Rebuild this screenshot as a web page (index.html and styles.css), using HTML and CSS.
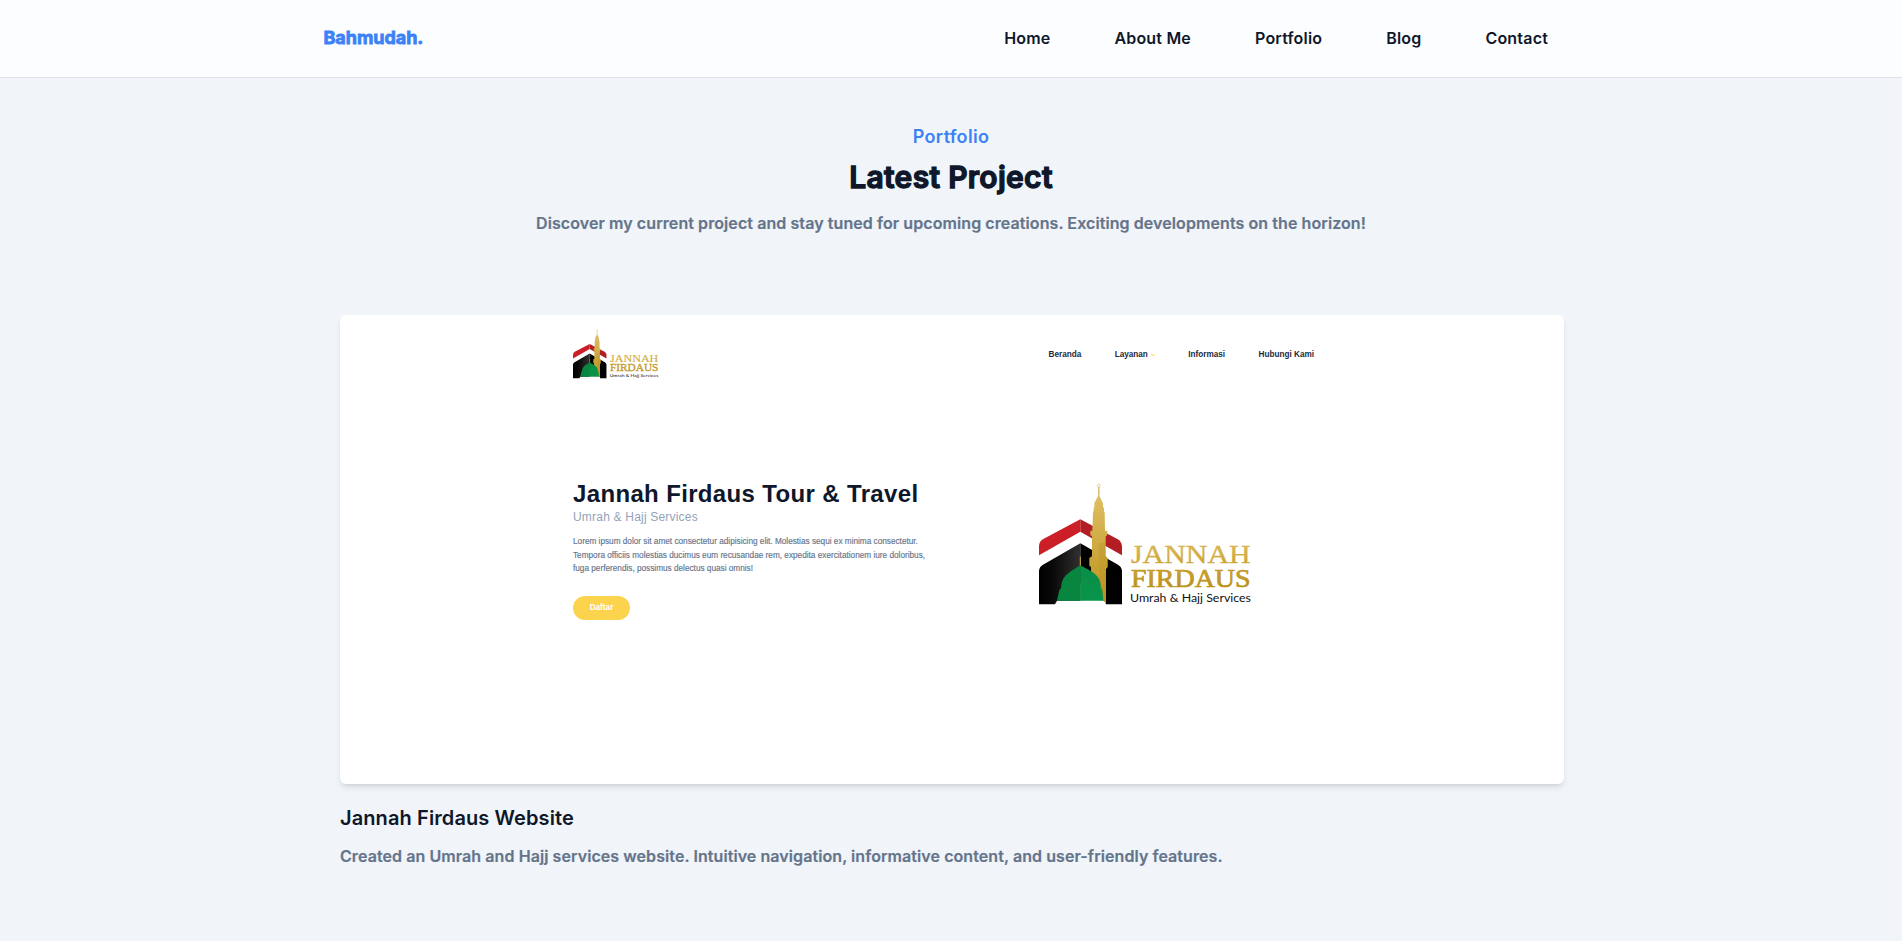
FILE: index.html
```html
<!DOCTYPE html>
<html lang="en">
<head>
<meta charset="utf-8">
<title>Bahmudah.</title>
<link rel="stylesheet" href="styles.css">
</head>
<body>
<header class="header">
  <a class="brand">Bahmudah.</a>
  <nav class="nav"><a>Home</a><a>About Me</a><a>Portfolio</a><a>Blog</a><a>Contact</a></nav>
</header>
<main class="portfolio">
  <div class="intro">
    <h4 class="eyebrow">Portfolio</h4>
    <h2 class="heading">Latest Project</h2>
    <p class="lead">Discover my current project and stay tuned for upcoming creations. Exciting developments on the horizon!</p>
  </div>
  <article class="project">
    <div class="preview">
      <div class="site-header">
        <svg class="site-logo" viewBox="57 40 640 368"><use href="#logo"/></svg>
        <div class="site-nav"><span>Beranda</span><span class="dropdown">Layanan<svg class="chevron" viewBox="0 0 4 4"><path d="M.2 1L2 2.800L3.800 1" fill="none" stroke="#fbd34d" stroke-width="1"/></svg></span><span>Informasi</span><span>Hubungi Kami</span></div>
      </div>
      <div class="site-hero">
        <div class="hero-copy">
          <div class="hero-title">Jannah Firdaus Tour &amp; Travel</div>
          <div class="hero-sub">Umrah &amp; Hajj Services</div>
          <div class="hero-text"><div>Lorem ipsum dolor sit amet consectetur adipisicing elit. Molestias sequi ex minima consectetur.</div><div>Tempora officiis molestias ducimus eum recusandae rem, expedita exercitationem iure doloribus,</div><div>fuga perferendis, possimus delectus quasi omnis!</div></div>
          <div class="hero-button">Daftar</div>
        </div>
        <svg class="hero-logo" viewBox="57 40 640 368">
          <defs>
            <linearGradient id="gold" x1="0" y1="0" x2="0" y2="1"><stop offset="0" stop-color="#dfbf60"/><stop offset="1" stop-color="#c79d28"/></linearGradient>
            <linearGradient id="gold2" x1="0" y1="0" x2="0" y2="1"><stop offset="0" stop-color="#d0a93c"/><stop offset="1" stop-color="#b68b10"/></linearGradient>
            <linearGradient id="tower" x1="0" y1="0" x2="0" y2="1"><stop offset="0" stop-color="#e0c067"/><stop offset="1" stop-color="#bd931c"/></linearGradient>
            <linearGradient id="coal"><stop offset="0" stop-color="#000"/><stop offset=".35" stop-color="#0a0a0a"/><stop offset="1" stop-color="#303030"/></linearGradient>
            <linearGradient id="dome" x1="0" y1="0" x2="0" y2="1"><stop offset="0" stop-color="#0a8d48"/><stop offset="1" stop-color="#09944b"/></linearGradient>
          </defs>
          <g id="logo">
            <path fill="#cb1e26" d="M57 257V228Q58 215 70 208L181 149V186Z"/>
            <path fill="#b31d24" d="M181 149L292 208Q305 215 306 230V257L181 186Z"/>
            <path fill="url(#coal)" d="M57 404V303Q58 291 69 285L181 221V404Z"/>
            <path fill="#000" d="M181 221L294 285Q305 291 306 303V404H257V330L181 340Z"/>
            <path fill="url(#tower)" d="M235 66L238 66L239 80L245 93L249 101V112L252 115V124L254 128L255 183H262V195L257 201V260L263 265V292L258 298V396H246L238 345L213 305V292L208 288V265L216 260V200L211 196V183H217L219 128L221 124V115L223 112V101L228 90L234 80Z"/>
            <path fill="#b98f20" opacity=".3" d="M237 220H257V260L263 265V292L258 298V396H246L237 345Z"/>
            <circle cx="236.500" cy="48" r="4.500" fill="none" stroke="#d6b968" stroke-width="2"/>
            <path d="M236.500 52V72" stroke="#d6b968" stroke-width="4"/>
            <path fill="#fff" d="M105 404L111 393H250L257 404V408H105Z"/>
            <path fill="url(#dome)" d="M181 287C202 300 238 311 242 343Q240 353 247 361L250 393H181Z"/>
            <path fill="#08863f" d="M181 287C159 302 128 314 124 346Q126 354 118 362L111 393H182V287Z"/>
            <path d="M181 261V288" stroke="#d4ac3c" stroke-width="3"/>
            <text class="logo-serif" x="333" y="281" font-size="75" fill="url(#gold)" stroke="#d3ae48" stroke-width="1" textLength="359" lengthAdjust="spacingAndGlyphs">JANNAH</text>
            <text class="logo-serif" x="333" y="353" font-size="75" fill="url(#gold2)" stroke="#bf9522" stroke-width="2" textLength="359" lengthAdjust="spacingAndGlyphs">FIRDAUS</text>
            <text class="logo-sans" x="330" y="396" font-size="33" fill="#111" textLength="363" lengthAdjust="spacingAndGlyphs">Umrah &amp; Hajj Services</text>
          </g>
        </svg>
      </div>
    </div>
    <h3 class="project-title">Jannah Firdaus Website</h3>
    <p class="project-text">Created an Umrah and Hajj services website. Intuitive navigation, informative content, and user-friendly features.</p>
  </article>
</main>
</body>
</html>
```
FILE: styles.css
```css
* { box-sizing: border-box; margin: 0; padding: 0; }
body { background: #f1f5f9; font-family: Inter, sans-serif; color: #0f172a; height: 941px; overflow: hidden; }
.header { height: 78px; padding: 0 354px 0 323.500px; background: #fcfdff; border-bottom: 1px solid #dfe3ea; display: flex; justify-content: space-between; align-items: center; }
.brand { font-size: 18px; line-height: 28px; font-weight: 700; -webkit-text-stroke: .8px #3b82f6; color: #3b82f6; letter-spacing: -.05px; padding-bottom: 1px; }
.nav { display: flex; gap: 64px; font-size: 16px; line-height: 24px; font-weight: 600; letter-spacing: .19px; padding-bottom: 1px; }
.intro { padding-top: 45px; text-align: center; }
.eyebrow { font-size: 18px; line-height: 28px; font-weight: 600; letter-spacing: .3px; color: #3b82f6; }
.heading { margin-top: 8px; font-size: 30px; line-height: 36px; font-weight: 600; letter-spacing: .3px; -webkit-text-stroke: 1.300px #0f172a; }
.lead { margin-top: 16px; font-size: 16px; line-height: 24px; font-weight: 600; letter-spacing: .085px; -webkit-text-stroke: .2px #64748b; color: #64748b; }
.project { margin: 80px 338px 0 340px; }
.preview { height: 469px; background: #fff; border-radius: 6px; box-shadow: 0 4px 6px -1px rgba(0,0,0,.1), 0 2px 4px -2px rgba(0,0,0,.1); font-family: "Liberation Sans", Arial, sans-serif; padding: 14px 250px 0 233px; }
.site-header { display: flex; justify-content: space-between; height: 50px; }
.site-logo { width: 86px; height: 50px; }
.site-nav { display: flex; align-items: flex-start; gap: 33.400px; font-size: 8.200px; line-height: 10px; font-weight: 700; padding-top: 21px; color: #1e293b; }
.dropdown { display: flex; align-items: center; }
.chevron { width: 4px; height: 4px; margin-left: 3px; }
.site-hero { display: flex; justify-content: space-between; padding: 101px 62px 0 0; }
.hero-copy { white-space: nowrap; }
.hero-title { font-size: 24px; line-height: 28px; font-weight: 700; letter-spacing: .35px; color: #0f172a; }
.hero-sub { font-size: 12px; line-height: 16px; letter-spacing: .2px; color: #94a3b8; padding-top: 1px; }
.hero-text { margin-top: 10px; font-size: 8.230px; line-height: 13.500px; color: #64748b; -webkit-text-stroke: .15px #64748b; }
.hero-button { width: 57px; height: 24px; margin-top: 20px; border-radius: 12px; background: #fcd34d; color: #fff; font-size: 8.200px; line-height: 24px; font-weight: 700; text-align: center; }
.hero-logo { width: 213.300px; height: 122.700px; margin-top: 3px; }
.logo-serif { font-family: "Liberation Serif", serif; }
.logo-sans { font-family: Lato, sans-serif; }
.project-title { margin-top: 20px; font-size: 20px; line-height: 28px; font-weight: 600; letter-spacing: .1px; }
.project-text { margin-top: 12px; font-size: 16px; line-height: 24px; font-weight: 600; letter-spacing: .08px; -webkit-text-stroke: .2px #64748b; color: #64748b; }
```
